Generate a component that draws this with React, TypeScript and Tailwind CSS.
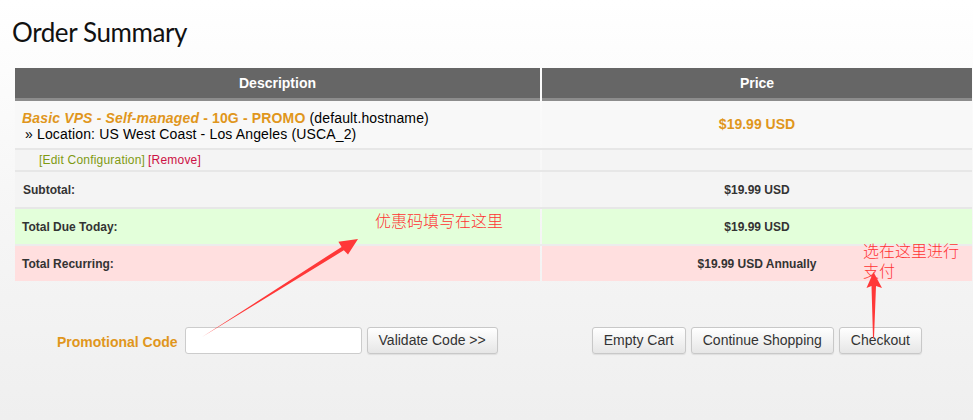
import React from "react";

const sans = { fontFamily: '"Liberation Sans", Arial, sans-serif' };

function Btn({ children }: { children: React.ReactNode }) {
  return (
    <button
      className="h-[27px] px-[11px] rounded-[3px] border border-[#c8c8c8] bg-gradient-to-b from-white to-[#e6e6e6] text-[14px] text-[#333] shadow-[0_1px_1px_rgba(0,0,0,0.08)]"
      style={sans}
    >
      {children}
    </button>
  );
}

export default function App() {
  return (
    <div
      className="relative w-[973px] h-[420px] overflow-hidden bg-gradient-to-b from-white via-[#f6f6f6] to-[#efefef]"
      style={sans}
    >
      <h1
        className="pl-[12px] pt-[15px] h-[68px] text-[26px] leading-[34px] text-[#111] tracking-[-0.4px]"
        style={{ fontFamily: 'Lato, "Open Sans", sans-serif' }}
      >
        Order Summary
      </h1>

      <div className="ml-[15px] w-[957px] flex flex-col">
        {/* header */}
        <div className="grid grid-cols-[525px_430px] gap-x-[2px]">
          <div className="h-[33px] bg-[#666] border-b-[3px] border-[#8c8c8c] flex items-center justify-center text-white font-bold text-[14px]">
            Description
          </div>
          <div className="h-[33px] bg-[#666] border-b-[3px] border-[#8c8c8c] flex items-center justify-center text-white font-bold text-[14px]">
            Price
          </div>
        </div>

        {/* product row */}
        <div className="grid grid-cols-[525px_430px] gap-x-[2px] border-b-2 border-[#e7e7e7]">
          <div className="h-[47px] bg-[#f8f8f8] pl-[7px] pt-[9px] text-[14px] leading-[16px] text-black tracking-[0.15px]">
            <div>
              <span className="font-bold text-[#e0961c]">
                <em>Basic VPS - Self-managed</em> - 10G - PROMO
              </span>{" "}
              (default.hostname)
            </div>
            <div className="pl-[3px]">» Location: US West Coast - Los Angeles (USCA_2)</div>
          </div>
          <div className="h-[47px] bg-[#f8f8f8] flex items-center justify-center font-bold text-[14px] text-[#e0961c]">
            $19.99 USD
          </div>
        </div>

        {/* edit row */}
        <div className="grid grid-cols-[525px_430px] gap-x-[2px] border-b-2 border-[#e7e7e7]">
          <div className="h-[20px] bg-[#f4f4f4] pl-[24px] flex items-center text-[12px] tracking-[0.2px]">
            <span className="text-[#7f9a12]">[Edit Configuration]</span>
            <span className="ml-[3px] text-[#cc1144]">[Remove]</span>
          </div>
          <div className="h-[20px] bg-[#f4f4f4]" />
        </div>

        {/* subtotal */}
        <div className="grid grid-cols-[525px_430px] gap-x-[2px] border-b-2 border-[#e7e7e7]">
          <div className="h-[35px] bg-[#f4f4f4] pl-[8px] flex items-center font-bold text-[12px] text-[#333]">
            Subtotal:
          </div>
          <div className="h-[35px] bg-[#f4f4f4] flex items-center justify-center font-bold text-[12px] text-[#333]">
            $19.99 USD
          </div>
        </div>

        {/* total due */}
        <div className="grid grid-cols-[525px_430px] gap-x-[2px] border-b-2 border-[#ececec]">
          <div className="h-[35px] bg-[#e3ffda] pl-[7px] flex items-center font-bold text-[12px] text-[#333]">
            Total Due Today:
          </div>
          <div className="h-[35px] bg-[#e3ffda] flex items-center justify-center font-bold text-[12px] text-[#333]">
            $19.99 USD
          </div>
        </div>

        {/* total recurring */}
        <div className="grid grid-cols-[525px_430px] gap-x-[2px]">
          <div className="h-[35px] bg-[#ffdfdf] pl-[7px] flex items-center font-bold text-[12px] text-[#333]">
            Total Recurring:
          </div>
          <div className="h-[35px] bg-[#ffdfdf] flex items-center justify-center font-bold text-[12px] text-[#333]">
            $19.99 USD Annually
          </div>
        </div>
      </div>

      {/* bottom actions */}
      <div className="mt-[46px] flex items-start">
        <div className="ml-[57px] flex items-center">
          <span className="font-bold text-[14px] text-[#e0961c] mt-[4px]">Promotional Code</span>
          <input
            className="ml-[7px] w-[177px] h-[27px] rounded-[3px] border border-[#ccc] bg-white"
            type="text"
          />
          <div className="ml-[5px]">
            <Btn>Validate Code &gt;&gt;</Btn>
          </div>
        </div>
        <div className="ml-[94px] flex gap-[5px]">
          <Btn>Empty Cart</Btn>
          <Btn>Continue Shopping</Btn>
          <Btn>Checkout</Btn>
        </div>
      </div>

      {/* annotations */}
      <div
        className="absolute left-[375px] top-[210px] text-[16px] leading-[20px] text-[#ff3333] font-light"
        style={{ fontFamily: '"Noto Sans CJK SC", sans-serif' }}
      >
        优惠码填写在这里
      </div>
      <div
        className="absolute left-[863px] top-[240px] w-[100px] text-[16px] leading-[20px] text-[#ff3333] font-light"
        style={{ fontFamily: '"Noto Sans CJK SC", sans-serif' }}
      >
        选在这里进行
        <br />
        支付
      </div>
      <svg className="absolute left-0 top-0 pointer-events-none" width="973" height="420">
        <polygon
          points="202,337 341.6,246.9 338.4,241.8 358,239 348,254.5 343.8,250.3"
          fill="#ff3838"
        />
        <polygon
          points="873,338 871.5,286 866.5,288 873.5,272 882,288 876,286 874,338"
          fill="#ff3838"
        />
      </svg>
    </div>
  );
}
